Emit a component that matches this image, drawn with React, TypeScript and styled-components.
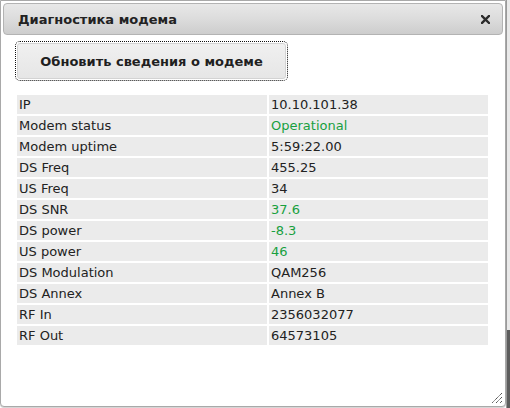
import React from "react"
import styled, { createGlobalStyle } from "styled-components"

const GlobalStyle = createGlobalStyle`
  html, body {
    margin: 0;
    padding: 0;
    background: #ffffff;
  }
  body {
    font-family: "DejaVu Sans", Verdana, sans-serif;
    overflow: hidden;
  }
`

type Row = {
  label: string
  value: string
  good?: boolean
}

const rows: Row[] = [
  { label: "IP", value: "10.10.101.38" },
  { label: "Modem status", value: "Operational", good: true },
  { label: "Modem uptime", value: "5:59:22.00" },
  { label: "DS Freq", value: "455.25" },
  { label: "US Freq", value: "34" },
  { label: "DS SNR", value: "37.6", good: true },
  { label: "DS power", value: "-8.3", good: true },
  { label: "US power", value: "46", good: true },
  { label: "DS Modulation", value: "QAM256" },
  { label: "DS Annex", value: "Annex B" },
  { label: "RF In", value: "2356032077" },
  { label: "RF Out", value: "64573105" },
]

const Screen = styled.div`
  display: flex;
  width: 510px;
  height: 408px;
`

const Dialog = styled.div`
  position: relative;
  box-sizing: border-box;
  width: 506px;
  height: 407px;
  padding: 2px;
  border: 1px solid #a9a9a9;
  border-radius: 0 0 4px 4px;
  background: #ffffff;
  box-shadow: 0 1px 0 #d6d6d6;
`

const TitleBar = styled.div`
  display: flex;
  align-items: center;
  justify-content: space-between;
  box-sizing: border-box;
  height: 32px;
  padding: 0 12px 0 14px;
  border: 1px solid #b3b3b3;
  border-radius: 4px;
  background: linear-gradient(to bottom, #e8e8e8 0%, #dcdcdc 50%, #cdcdcd 100%);
`

const Title = styled.span`
  font-size: 13px;
  font-weight: bold;
  color: #222222;
`

const CloseIcon = styled.svg`
  width: 9px;
  height: 9px;
  display: block;
`

const Content = styled.div`
  padding: 8px 0 0 12px;
`

const RefreshButton = styled.button`
  box-sizing: border-box;
  width: 269px;
  height: 36px;
  margin: 0 0 14px 2px;
  border: 1px solid #d3d3d3;
  border-radius: 3px;
  background: linear-gradient(to bottom, #f0f0f0 0%, #e6e6e6 100%);
  outline: 1px dotted #111111;
  outline-offset: 1px;
  font-family: "DejaVu Sans", Verdana, sans-serif;
  font-size: 13px;
  font-weight: bold;
  color: #1f1f1f;
  cursor: pointer;
`

const InfoTable = styled.table`
  width: 475px;
  border-collapse: separate;
  border-spacing: 2px;
  font-size: 13px;
  color: #222222;
`

const Cell = styled.td<{ $good?: boolean; $label?: boolean }>`
  height: 19px;
  padding: 0 2px;
  line-height: 19px;
  background: #ebebeb;
  width: ${(p) => (p.$label ? "246px" : "auto")};
  color: ${(p) => (p.$good ? "#18a03f" : "#222222")};
  white-space: nowrap;
`

const ResizeGrip = styled.svg`
  position: absolute;
  right: 2px;
  bottom: 2px;
  width: 12px;
  height: 12px;
`

const PageEdge = styled.div`
  flex: 1;
  display: flex;
  flex-direction: column;
  justify-content: flex-end;
  background: #e9e9e9;
  border-left: 1px solid #9a9a9a;
`

const ScrollThumb = styled.div`
  height: 78px;
  background: #5d5d5d;
`

export default function App() {
  return (
    <>
      <GlobalStyle />
      <Screen>
        <Dialog>
          <TitleBar>
            <Title>Диагностика модема</Title>
            <CloseIcon viewBox="0 0 9 9">
              <path d="M1 1 L8 8 M8 1 L1 8" stroke="#2b2b2b" strokeWidth="2.4" strokeLinecap="square" />
            </CloseIcon>
          </TitleBar>
          <Content>
            <RefreshButton>Обновить сведения о модеме</RefreshButton>
            <InfoTable>
              <tbody>
                {rows.map((r) => (
                  <tr key={r.label}>
                    <Cell $label>{r.label}</Cell>
                    <Cell $good={r.good}>{r.value}</Cell>
                  </tr>
                ))}
              </tbody>
            </InfoTable>
          </Content>
          <ResizeGrip viewBox="0 0 12 12">
            <path d="M11 1 L1 11 M11 5 L5 11 M11 9 L9 11" stroke="#333" strokeWidth="1" strokeDasharray="1.2 0.6" />
          </ResizeGrip>
        </Dialog>
        <PageEdge>
          <ScrollThumb />
        </PageEdge>
      </Screen>
    </>
  )
}
